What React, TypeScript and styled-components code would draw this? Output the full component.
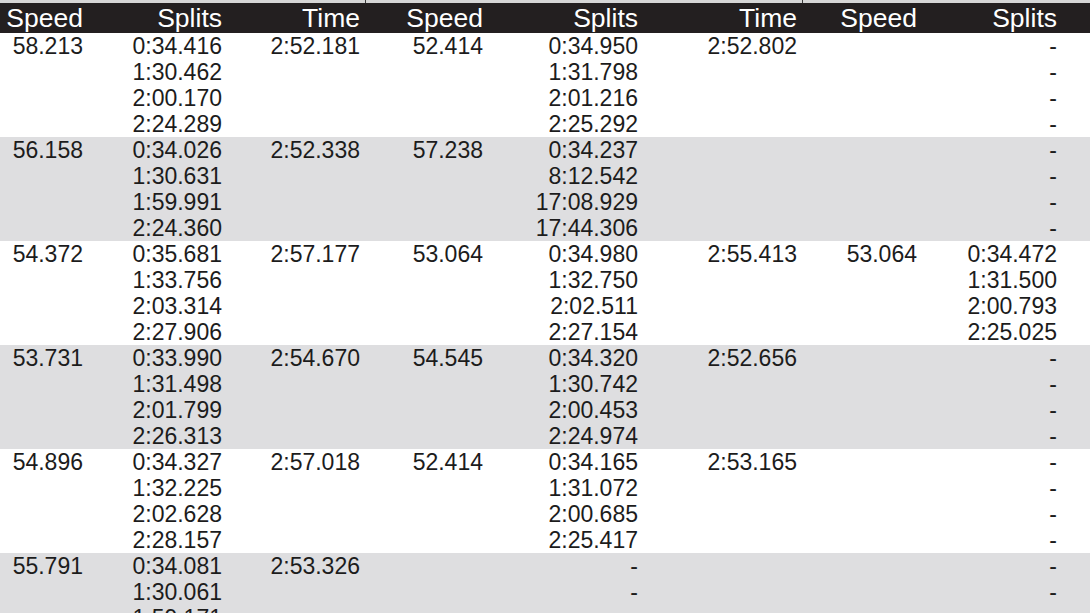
import React from "react";
import styled, { createGlobalStyle } from "styled-components";

const GlobalStyle = createGlobalStyle`
  html, body {
    margin: 0;
    padding: 0;
    background: #ffffff;
    overflow: hidden;
  }
  body {
    font-family: "Liberation Sans", Arial, sans-serif;
    color: #1c1c1c;
  }
`;

const COLS = "89px 139px 138px 123px 155px 159px 120px 140px 160px";

const Page = styled.div`
  width: 1090px;
  height: 613px;
  overflow: hidden;
`;

const Table = styled.div`
  width: 1223px;
  display: flex;
  flex-direction: column;
`;

const GroupBar = styled.div`
  display: grid;
  grid-template-columns: 366px 437px 420px;
  height: 3px;
  background: #d6d6d6;
`;

const GroupCell = styled.div`
  border-right: 1px solid #3a3a3a;
`;

const HeaderRow = styled.div`
  display: grid;
  grid-template-columns: ${COLS};
  height: 30px;
  background: #231f20;
  color: #ffffff;
  font-size: 26.5px;
  line-height: 30px;
`;

const HeaderCell = styled.div`
  text-align: right;
  padding-right: 6px;
  white-space: nowrap;
`;

const DataRow = styled.div<{ $shaded: boolean }>`
  display: grid;
  grid-template-columns: ${COLS};
  height: 104px;
  background: ${(p) => (p.$shaded ? "#dedee0" : "#ffffff")};
  font-size: 23px;
  line-height: 26px;
`;

const Cell = styled.div`
  text-align: right;
  padding-right: 6px;
  white-space: nowrap;
  display: flex;
  flex-direction: column;
`;

const Line = styled.div`
  height: 26px;
`;

type Group = { speed?: string; splits?: string[]; time?: string };
type Row = Group[];

const D = ["-", "-", "-", "-"];

const rows: Row[] = [
  [
    { speed: "58.213", splits: ["0:34.416", "1:30.462", "2:00.170", "2:24.289"], time: "2:52.181" },
    { speed: "52.414", splits: ["0:34.950", "1:31.798", "2:01.216", "2:25.292"], time: "2:52.802" },
    { splits: D },
  ],
  [
    { speed: "56.158", splits: ["0:34.026", "1:30.631", "1:59.991", "2:24.360"], time: "2:52.338" },
    { speed: "57.238", splits: ["0:34.237", "8:12.542", "17:08.929", "17:44.306"] },
    { splits: D },
  ],
  [
    { speed: "54.372", splits: ["0:35.681", "1:33.756", "2:03.314", "2:27.906"], time: "2:57.177" },
    { speed: "53.064", splits: ["0:34.980", "1:32.750", "2:02.511", "2:27.154"], time: "2:55.413" },
    { speed: "53.064", splits: ["0:34.472", "1:31.500", "2:00.793", "2:25.025"] },
  ],
  [
    { speed: "53.731", splits: ["0:33.990", "1:31.498", "2:01.799", "2:26.313"], time: "2:54.670" },
    { speed: "54.545", splits: ["0:34.320", "1:30.742", "2:00.453", "2:24.974"], time: "2:52.656" },
    { splits: D },
  ],
  [
    { speed: "54.896", splits: ["0:34.327", "1:32.225", "2:02.628", "2:28.157"], time: "2:57.018" },
    { speed: "52.414", splits: ["0:34.165", "1:31.072", "2:00.685", "2:25.417"], time: "2:53.165" },
    { splits: D },
  ],
  [
    { speed: "55.791", splits: ["0:34.081", "1:30.061", "1:59.171", "2:23.904"], time: "2:53.326" },
    { splits: D },
    { splits: D },
  ],
];

const headers = ["Speed", "Splits", "Time", "Speed", "Splits", "Time", "Speed", "Splits", "Time"];

export default function App() {
  return (
    <>
      <GlobalStyle />
      <Page>
        <Table>
          <GroupBar>
            <GroupCell />
            <GroupCell />
            <GroupCell />
          </GroupBar>
          <HeaderRow>
            {headers.map((h, i) => (
              <HeaderCell key={i}>{h}</HeaderCell>
            ))}
          </HeaderRow>
          {rows.map((row, ri) => (
            <DataRow key={ri} $shaded={ri % 2 === 1}>
              {row.map((g, gi) => (
                <React.Fragment key={gi}>
                  <Cell>
                    <Line>{g.speed ?? ""}</Line>
                  </Cell>
                  <Cell>
                    {(g.splits ?? []).map((s, si) => (
                      <Line key={si}>{s}</Line>
                    ))}
                  </Cell>
                  <Cell>
                    <Line>{g.time ?? ""}</Line>
                  </Cell>
                </React.Fragment>
              ))}
            </DataRow>
          ))}
        </Table>
      </Page>
    </>
  );
}
